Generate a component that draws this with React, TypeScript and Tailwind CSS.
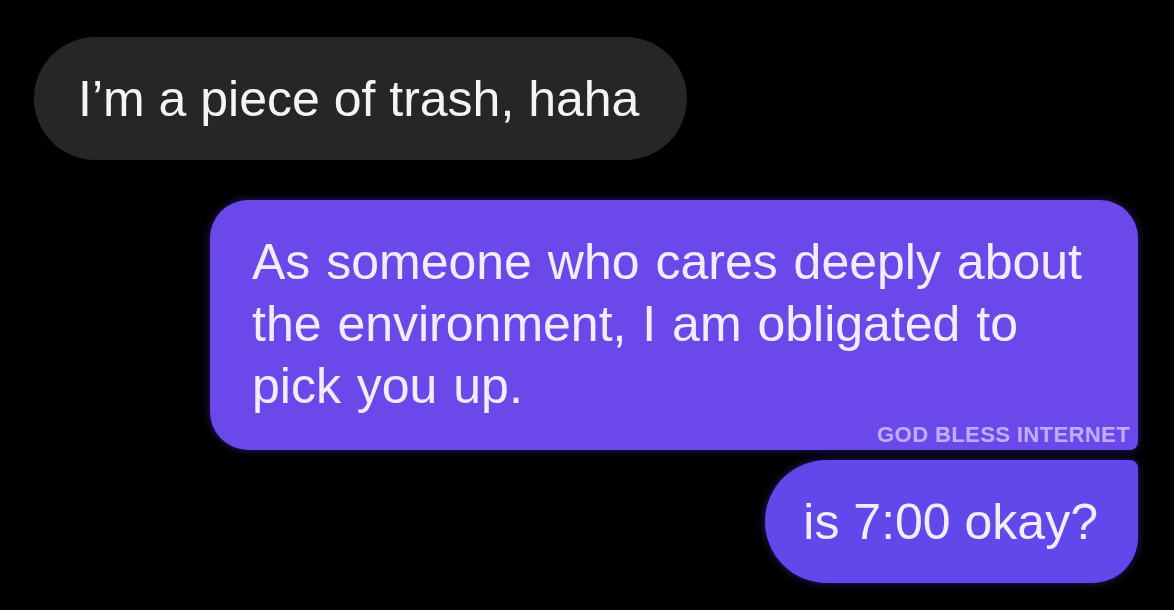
export default function App() {
  return (
    <div className="w-[1174px] h-[610px] bg-black overflow-hidden font-['Liberation_Sans',Arial,sans-serif]">
      <div className="flex flex-col pt-[37px]">
        {/* incoming */}
        <div className="self-start ml-[34px] h-[123px] flex items-center pl-[44px] pr-[48px] rounded-full bg-[#262626] text-[#f4f4f4] text-[50px] leading-[60px]">
          I’m a piece of trash, haha
        </div>

        {/* outgoing, long */}
        <div className="relative self-end mr-[36px] mt-[40px] w-[928px] pl-[42px] pt-[31px] pb-[33px] rounded-[38px] rounded-br-[8px] bg-[#6a48e9] text-[#f3ecff] text-[50px] leading-[62px] [word-spacing:2px] shadow-[0_0_8px_rgba(80,50,200,0.55)]">
          As someone who cares deeply about
          <br />
          the environment, I am obligated to
          <br />
          pick you up.
          <span className="absolute right-[8px] bottom-[4px] text-[22px] leading-none font-bold tracking-[0.4px] [word-spacing:0px] text-[#d6cbff]/80">
            GOD BLESS INTERNET
          </span>
        </div>

        {/* outgoing, short */}
        <div className="self-end mr-[36px] mt-[10px] h-[123px] flex items-center pl-[38px] pr-[40px] rounded-tl-[62px] rounded-bl-[62px] rounded-br-[46px] rounded-tr-[8px] bg-[#6048ea] text-[#f3ecff] text-[50px] leading-[60px] shadow-[0_0_8px_rgba(80,50,200,0.55)]">
          is 7:00 okay?
        </div>
      </div>
    </div>
  )
}
